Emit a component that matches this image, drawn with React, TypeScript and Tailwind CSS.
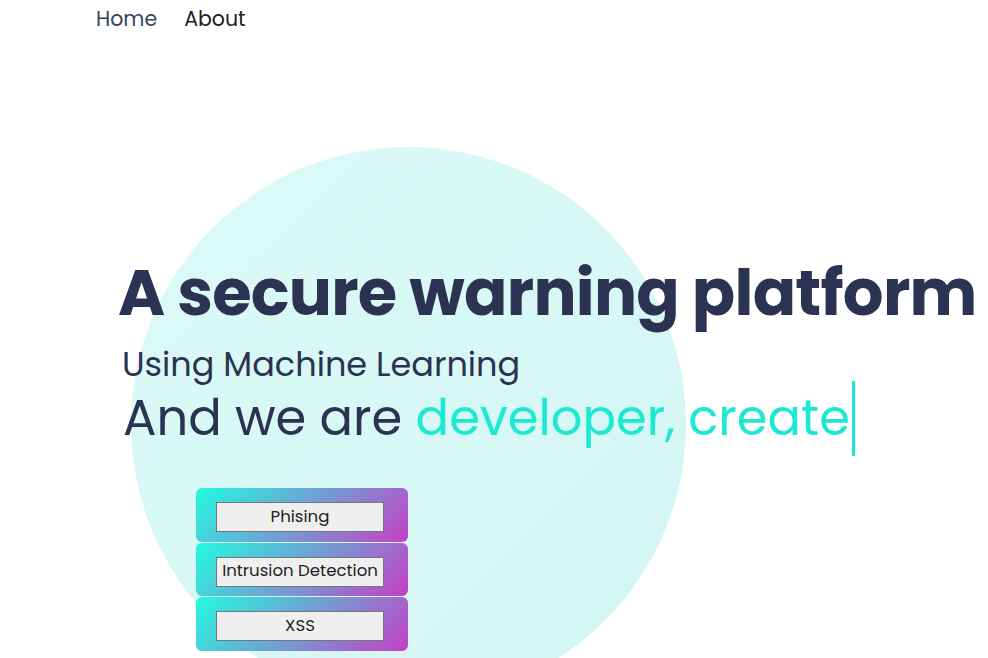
import React from 'react';

const threats = ['Phising', 'Intrusion Detection', 'XSS'];

export default function App() {
  return (
    <div
      className="relative h-[658px] w-[988px] overflow-hidden bg-white"
      style={{ fontFamily: 'Poppins, Lato, "Open Sans", sans-serif' }}
    >
      {/* background blob */}
      <div className="absolute left-[131px] top-[147px] h-[555px] w-[555px] rounded-full bg-gradient-to-br from-[#dcfaf7] to-[#d3f6f2]" />

      <nav className="relative flex h-[33px] gap-[27px] pl-[96px] pt-[5px] text-[20.5px] leading-[28px]">
        <a className="text-[#34465c]">Home</a>
        <a className="text-[#222222]">About</a>
      </nav>

      <section className="relative pl-[118px] pt-[228px]">
        <h1 className="whitespace-nowrap text-[64px] font-bold leading-[64px] tracking-[-0.75px] text-[#2b3252]">
          A secure warning platform
        </h1>
        <p className="mt-[20px] pl-[4px] text-[33.5px] leading-[40px] text-[#2b3252]">
          Using Machine Learning
        </p>
        <p className="mt-[3px] flex h-[60px] items-center whitespace-nowrap pl-[5px] text-[49.6px] leading-[60px] text-[#2b3252]">
          <span>And we are&nbsp;</span>
          <span className="text-[#1de9d3]">developer, create</span>
          <span className="ml-[2px] h-[75px] w-[3px] shrink-0 bg-[#1de9d3]" />
        </p>

        <div className="ml-[78px] mt-[40px] flex w-[212px] flex-col gap-[1px]">
          {threats.map((t) => (
            <div
              key={t}
              className="flex h-[53.5px] items-start rounded-[6px] bg-linear-135/srgb from-[#22fbe0] to-[#c43fc6] pl-[20px] pt-[14px]"
            >
              <button className="h-[30px] w-[168px] border border-[#767676] bg-[#efefef] text-[16.6px] text-[#222222]">
                {t}
              </button>
            </div>
          ))}
        </div>
      </section>
    </div>
  );
}
